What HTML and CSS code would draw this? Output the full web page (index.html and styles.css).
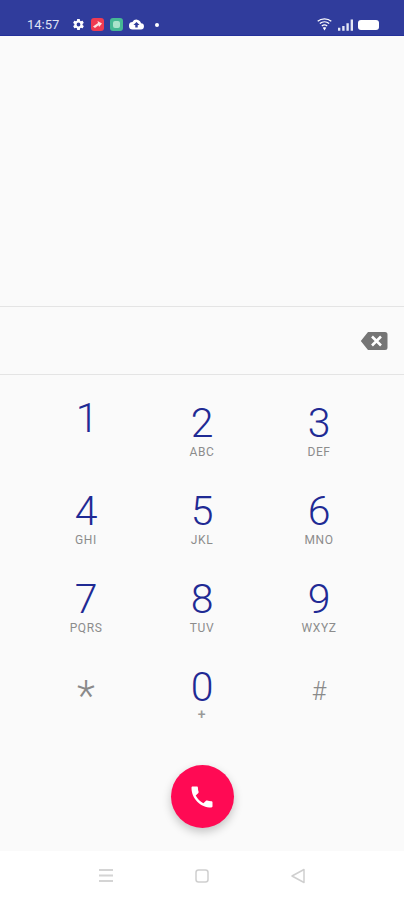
FILE: index.html
```html
<!DOCTYPE html>
<html lang="en">
<head>
    <meta charset="UTF-8">
    <title>Dialer</title>
    <link rel="stylesheet" href="styles.css">
</head>
<body>
    <div class="status-bar">
        <div class="status-left">
            <span class="clock">14:57</span>
            <svg class="ic-gear" width="13" height="13" viewBox="0 0 24 24"><path fill="#fff" d="M19.400 13c.1-.3.1-.7.1-1s0-.7-.1-1l2.100-1.600c.2-.2.2-.4.1-.6l-2-3.500c-.1-.2-.4-.3-.6-.2l-2.500 1c-.5-.4-1.100-.7-1.700-1L14.400 2.500c0-.3-.2-.5-.5-.5h-4c-.2 0-.4.2-.5.4L9 5.100c-.6.3-1.200.6-1.700 1l-2.500-1c-.2-.1-.5 0-.6.2l-2 3.500c-.1.2-.1.5.1.6L4.500 11c0 .3-.1.700-.1 1s0 .7.1 1l-2.100 1.600c-.2.2-.2.4-.1.6l2 3.500c.1.2.4.3.6.2l2.500-1c.5.4 1.100.7 1.700 1l.4 2.600c0 .3.2.5.5.5h4c.2 0 .5-.2.5-.4l.4-2.700c.6-.3 1.200-.6 1.700-1l2.500 1c.2.1.5 0 .6-.2l2-3.500c.1-.2.1-.5-.1-.6zM12 15.500a3.500 3.500 0 1 1 0-7 3.500 3.500 0 0 1 0 7z"/></svg>
            <span class="app-icon red"><svg width="9" height="9" viewBox="0 0 9 9"><path fill="#fbe4e4" d="M0 6.500 5 3 4.500 1 9 3.500 6 7 5.500 5.200 2 8z"/></svg></span>
            <span class="app-icon green"><i></i></span>
            <svg class="ic-cloud" width="15" height="11" viewBox="0 0 24 18"><path fill="#fff" d="M19.400 7A7.500 7.500 0 0 0 5.400 5 6 6 0 0 0 6 17h13a5 5 0 0 0 .4-10zM14 10v4h-4v-4H7l5-5 5 5z"/></svg>
            <span class="dot"></span>
        </div>
        <div class="status-right">
            <svg width="15" height="13" viewBox="0 0 15 13"><path fill="none" stroke="#fff" stroke-width="1.300" d="M.7 3.200C4.500 0 10.500 0 14.300 3.200M2.800 5.600c2.700-2.200 6.700-2.200 9.400 0M4.800 8c1.500-1.200 3.900-1.200 5.400 0"/><path fill="#fff" d="M7.500 12.500 5.800 9.700c1-.6 2.400-.6 3.400 0z"/></svg>
            <svg class="ic-signal" width="15" height="12" viewBox="0 0 16 12"><path fill="#e4e7f5" d="M0 9h2.500v3H0zM4.500 7H7v5H4.500zM9 4h2.500v8H9zM13.500 0H16v12h-2.500z"/></svg>
            <span class="battery"></span>
        </div>
    </div>

    <div class="log-area"></div>

    <div class="number-row">
        <svg width="28" height="20" viewBox="0 0 28 20"><path fill="#757575" d="M8 1h17a2.500 2.500 0 0 1 2.500 2.500v13A2.500 2.500 0 0 1 25 19H8L.8 10z"/><path fill="none" stroke="#fff" stroke-width="2.600" d="m12 5.500 9 9m0-9-9 9"/></svg>
    </div>

    <div class="keypad">
        <div class="key one"><span class="digit">1</span></div>
        <div class="key"><span class="digit">2</span><span class="letters">ABC</span></div>
        <div class="key"><span class="digit">3</span><span class="letters">DEF</span></div>
        <div class="key"><span class="digit">4</span><span class="letters">GHI</span></div>
        <div class="key"><span class="digit">5</span><span class="letters">JKL</span></div>
        <div class="key"><span class="digit">6</span><span class="letters">MNO</span></div>
        <div class="key"><span class="digit">7</span><span class="letters">PQRS</span></div>
        <div class="key"><span class="digit">8</span><span class="letters">TUV</span></div>
        <div class="key"><span class="digit">9</span><span class="letters">WXYZ</span></div>
        <div class="key"><span class="digit gray star">*</span></div>
        <div class="key"><span class="digit">0</span><span class="letters plus">+</span></div>
        <div class="key"><span class="digit gray hash">#</span></div>
    </div>

    <div class="call-row">
        <div class="call-btn">
            <svg width="28" height="28" viewBox="0 0 24 24"><path fill="#fff" d="M6.600 10.800c1.400 2.800 3.800 5.100 6.600 6.600l2.200-2.200c.3-.3.700-.4 1-.2 1.100.4 2.300.6 3.600.6.600 0 1 .4 1 1V20c0 .6-.4 1-1 1C10.600 21 3 13.400 3 4c0-.6.400-1 1-1h3.500c.6 0 1 .4 1 1 0 1.300.2 2.500.6 3.600.1.300 0 .7-.2 1z"/></svg>
        </div>
    </div>

    <div class="nav-bar">
        <svg width="16" height="15" viewBox="0 0 16 15"><path fill="none" stroke="#d4d4d4" stroke-width="2" d="M1 2h14M1 7.500h14M1 13h14"/></svg>
        <svg width="14" height="14" viewBox="0 0 14 14"><rect x="1" y="1" width="12" height="12" rx="2.500" fill="none" stroke="#cfcfcf" stroke-width="1.500"/></svg>
        <svg width="16" height="16" viewBox="0 0 16 16"><path fill="none" stroke="#cfcfcf" stroke-width="1.500" stroke-linejoin="round" d="M14 1.500v13L2 8z"/></svg>
    </div>
</body>
</html>
```

FILE: styles.css
```css
* {
    box-sizing: border-box;
}
body {
    margin: 0;
    height: 900px;
    overflow: hidden;
    display: flex;
    flex-direction: column;
    background: #fafafa;
    font-family: Roboto, "Liberation Sans", sans-serif;
}
.status-bar {
    height: 36px;
    flex: none;
    padding: 14px 25px 0 27px;
    display: flex;
    justify-content: space-between;
    align-items: center;
    background: #303c9c;
    border-bottom: 1px solid #24309a;
    color: #dfe3f4;
}
.status-left, .status-right {
    display: flex;
    align-items: center;
}
.clock {
    font-size: 13px;
    margin-right: 13px;
}
.status-left svg, .app-icon {
    margin-right: 6px;
}
.status-left .app-icon svg {
    margin: 0;
}
.app-icon {
    width: 13px;
    height: 13px;
    border-radius: 3px;
    display: flex;
    align-items: center;
    justify-content: center;
}
.app-icon i {
    width: 7px;
    height: 7px;
    border-radius: 2px;
    background: #a9e3cb;
}
.red {
    background: #ef3b52;
}
.green {
    background: #45b894;
}
.dot {
    width: 4px;
    height: 4px;
    margin-left: 5px;
    border-radius: 50%;
    background: #fff;
}
.status-right {
    gap: 6px;
}
.ic-signal {
    margin-right: -1px;
}
.battery {
    width: 21px;
    height: 10px;
    border-radius: 3px;
    background: #fff;
}
.log-area {
    height: 271px;
    flex: none;
    border-bottom: 1px solid #e4e4e4;
}
.number-row {
    height: 68px;
    flex: none;
    padding: 1px 16px 0 0;
    display: flex;
    justify-content: flex-end;
    align-items: center;
    border-bottom: 1px solid #e4e4e4;
}
.keypad {
    flex: none;
    padding-left: 28px;
    height: 352px;
    display: grid;
    grid-template-columns: 116px 116px 118px;
    grid-auto-rows: 88px;
}
.key {
    padding-top: 28px;
    display: flex;
    flex-direction: column;
    align-items: center;
}
.one {
    padding: 23px 0 0 2px;
}
.digit {
    font-size: 41px;
    font-weight: 300;
    line-height: 40px;
    color: #1f2a94;
}
.letters {
    font-size: 12px;
    line-height: 14px;
    margin-top: 2px;
    letter-spacing: .6px;
    color: #8c8c8c;
}
.plus {
    font-size: 14px;
    font-weight: 500;
    line-height: 12px;
    margin-top: 1px;
    color: #999;
}
.gray {
    color: #8a8a8a;
}
.star {
    font-size: 42px;
    font-weight: 300;
    line-height: 40px;
    margin-top: 9px;
}
.hash {
    font-size: 25px;
    line-height: 40px;
    margin-top: 5px;
}
.call-row {
    flex: 1;
    display: flex;
    justify-content: center;
    padding-top: 38px;
}
.call-btn {
    width: 63px;
    height: 63px;
    border-radius: 50%;
    display: flex;
    align-items: center;
    justify-content: center;
    background: #ff0a54;
    box-shadow: 0 4px 10px rgba(0, 0, 0, .22);
}
.nav-bar {
    height: 49px;
    flex: none;
    padding: 0 98px;
    display: flex;
    justify-content: space-between;
    align-items: center;
    background: #fff;
}
```
